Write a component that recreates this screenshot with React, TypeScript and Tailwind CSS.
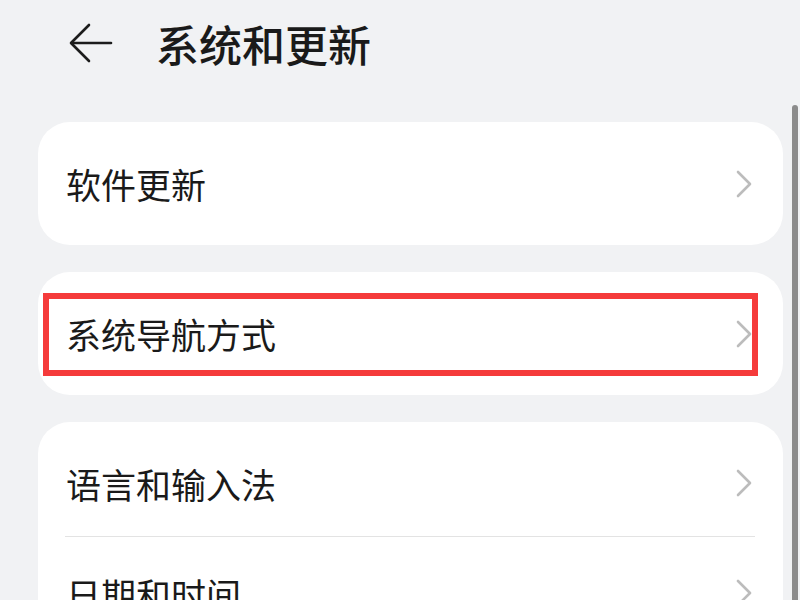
import React from "react";

const font = { fontFamily: '"Noto Sans CJK SC", "Noto Sans", sans-serif' };

function BackArrow() {
  return (
    <svg
      viewBox="0 0 44 40"
      className="h-[40px] w-[44px]"
      fill="none"
      stroke="#1c1c1c"
      strokeWidth="2.6"
      strokeLinecap="round"
      strokeLinejoin="round"
      aria-hidden
    >
      <path d="M42 20H3" />
      <path d="M20 2L2 20l18 18" />
    </svg>
  );
}

function Chevron() {
  return (
    <svg
      viewBox="0 0 16 28"
      className="h-[28px] w-[16px] shrink-0"
      fill="none"
      stroke="#bcbcbc"
      strokeWidth="2.6"
      strokeLinecap="round"
      strokeLinejoin="round"
      aria-hidden
    >
      <path d="M2 2l12 12L2 26" />
    </svg>
  );
}

function Row({ label }: { label: string }) {
  return (
    <div className="flex h-full items-center justify-between pl-[28px] pr-[31px]">
      <span className="text-[35px] leading-none text-[#1a1a1a]">{label}</span>
      <Chevron />
    </div>
  );
}

export default function App() {
  return (
    <div
      className="relative h-[600px] w-[800px] overflow-hidden bg-[#f1f2f4]"
      style={font}
    >
      <header className="flex h-[122px] items-start pl-[69px] pt-[23px]">
        <BackArrow />
        <h1 className="ml-[43px] -mt-[2px] text-[43px] font-medium leading-[44px] text-[#1a1a1a]">
          系统和更新
        </h1>
      </header>

      <div className="ml-[38px] mr-[17px] flex flex-col gap-[27px]">
        <div className="h-[123px] rounded-[32px] bg-white">
          <Row label="软件更新" />
        </div>

        <div className="relative h-[123px] rounded-[32px] bg-white">
          <Row label="系统导航方式" />
          <div className="absolute left-[5px] top-[21px] h-[83px] w-[715px] border-[6px] border-[#f53b3b]" />
        </div>

        <div className="rounded-[32px] bg-white pt-[8px]">
          <div className="h-[106px]">
            <Row label="语言和输入法" />
          </div>
          <div className="ml-[27px] mr-[28px] h-px bg-[#e3e3e3]" />
          <div className="h-[112px]">
            <Row label="日期和时间" />
          </div>
        </div>
      </div>

      <div className="absolute right-[2px] top-[105px] bottom-0 w-[6px] rounded-t-full bg-[#8c8c8c]" />
    </div>
  );
}
